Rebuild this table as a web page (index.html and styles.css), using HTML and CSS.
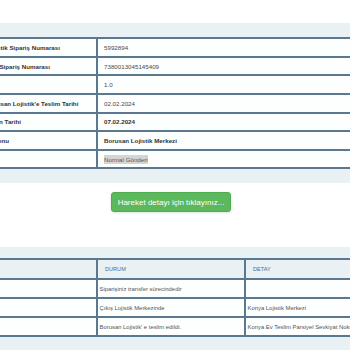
FILE: index.html
```html
<!DOCTYPE html>
<html lang="tr">
<head>
<meta charset="utf-8">
<link rel="stylesheet" href="styles.css">
</head>
<body>
<div class="top-space"></div>
<section class="panel">
  <div class="strip strip-top"></div>
  <div class="clip">
    <div class="info">
      <div class="row"><div class="label">Lojistik Sipariş Numarası</div><div class="value">5992894</div></div>
      <div class="row"><div class="label">Ana Sipariş Numarası</div><div class="value">7380013045145409</div></div>
      <div class="row"><div class="label">Desi</div><div class="value">1.0</div></div>
      <div class="row"><div class="label">Borusan Lojistik'e Teslim Tarihi</div><div class="value">02.02.2024</div></div>
      <div class="row"><div class="label">Kalan Tarihi</div><div class="value bold">07.02.2024</div></div>
      <div class="row"><div class="label">Deponu</div><div class="value bold">Borusan Lojistik Merkezi</div></div>
      <div class="row"><div class="label">Tip</div><div class="value"><span class="mark">Normal Gönderi</span></div></div>
    </div>
  </div>
  <div class="strip strip-mid"></div>
</section>
<div class="action">
  <button class="btn-green" type="button">Hareket detayı için tıklayınız...</button>
</div>
<section class="panel">
  <div class="strip strip-small"></div>
  <div class="moves">
    <div class="mrow mhead"><div class="c1"></div><div class="c2">DURUM</div><div class="c3">DETAY</div></div>
    <div class="mrow"><div class="c1"></div><div class="c2">Siparişiniz transfer sürecindedir</div><div class="c3"></div></div>
    <div class="mrow"><div class="c1"></div><div class="c2">Çıkış Lojistik Merkezinde</div><div class="c3">Konya Lojistik Merkezi</div></div>
    <div class="mrow"><div class="c1"></div><div class="c2">Borusan Lojistik' e teslim edildi.</div><div class="c3">Konya Ev Teslim Parsiyel Sevkiyat Noktası</div></div>
  </div>
  <div class="strip strip-bottom"></div>
</section>
</body>
</html>
```
FILE: styles.css
```css
* { box-sizing: border-box; }
html, body { margin: 0; padding: 0; background: #ffffff; }
body {
  font-family: "Liberation Sans", Arial, sans-serif;
  color: #444;
  width: 350px;
  height: 350px;
  overflow: hidden;
}
.top-space { height: 23px; }
.strip { background: #e9f1f5; }
.strip-top { height: 14.3px; }
.strip-mid { height: 14px; }
.strip-small { height: 11px; }
.strip-bottom { height: 34px; }

.clip { overflow: hidden; }
.info {
  margin-left: -14px;
  border-top: 2px solid #5a7890;
}
.row {
  display: grid;
  grid-template-columns: 112px 1fr;
  height: 18.6px;
  border-bottom: 2px solid #5a7890;
  background: #fdfefe;
}
.label {
  font-weight: bold;
  font-size: 6.2px;
  color: #333;
  border-right: 2px solid #5a7890;
  display: flex;
  align-items: center;
  white-space: nowrap;
  overflow: hidden;
}
.value {
  font-size: 6.2px;
  color: #4a4a4a;
  padding-left: 6px;
  display: flex;
  align-items: center;
  white-space: nowrap;
}
.value.bold { font-weight: bold; color: #333; }
.mark { background: #d5d5d5; padding: 1px 0; color: #555; }

.action {
  height: 64px;
  display: flex;
  justify-content: center;
  padding-top: 9px;
  padding-right: 8px;
}
.btn-green {
  width: 120px;
  height: 20px;
  background: #5cb85c;
  border: 1px solid #4cae4c;
  border-radius: 3px;
  color: #fff;
  font-family: "Liberation Sans", Arial, sans-serif;
  font-size: 8px;
  padding: 0;
  box-shadow: 0 1px 3px rgba(0,0,0,0.12);
}

.moves { border-top: 2px solid #5a7890; }
.mrow {
  display: grid;
  grid-template-columns: 98px 148px 1fr;
  height: 19px;
  border-bottom: 2px solid #5a7890;
  background: #fdfefe;
  font-size: 5.9px;
  color: #555;
  white-space: nowrap;
}
.mrow > div { display: flex; align-items: center; overflow: hidden; }
.c1, .c2 { border-right: 2px solid #5a7890; }
.c2, .c3 { padding-left: 1.5px; }
.mhead { height: 20px; background: #e9f1f5; }
.mhead .c2, .mhead .c3 { padding-left: 7px; color: #4d6b8c; font-size: 5.6px; }
```
